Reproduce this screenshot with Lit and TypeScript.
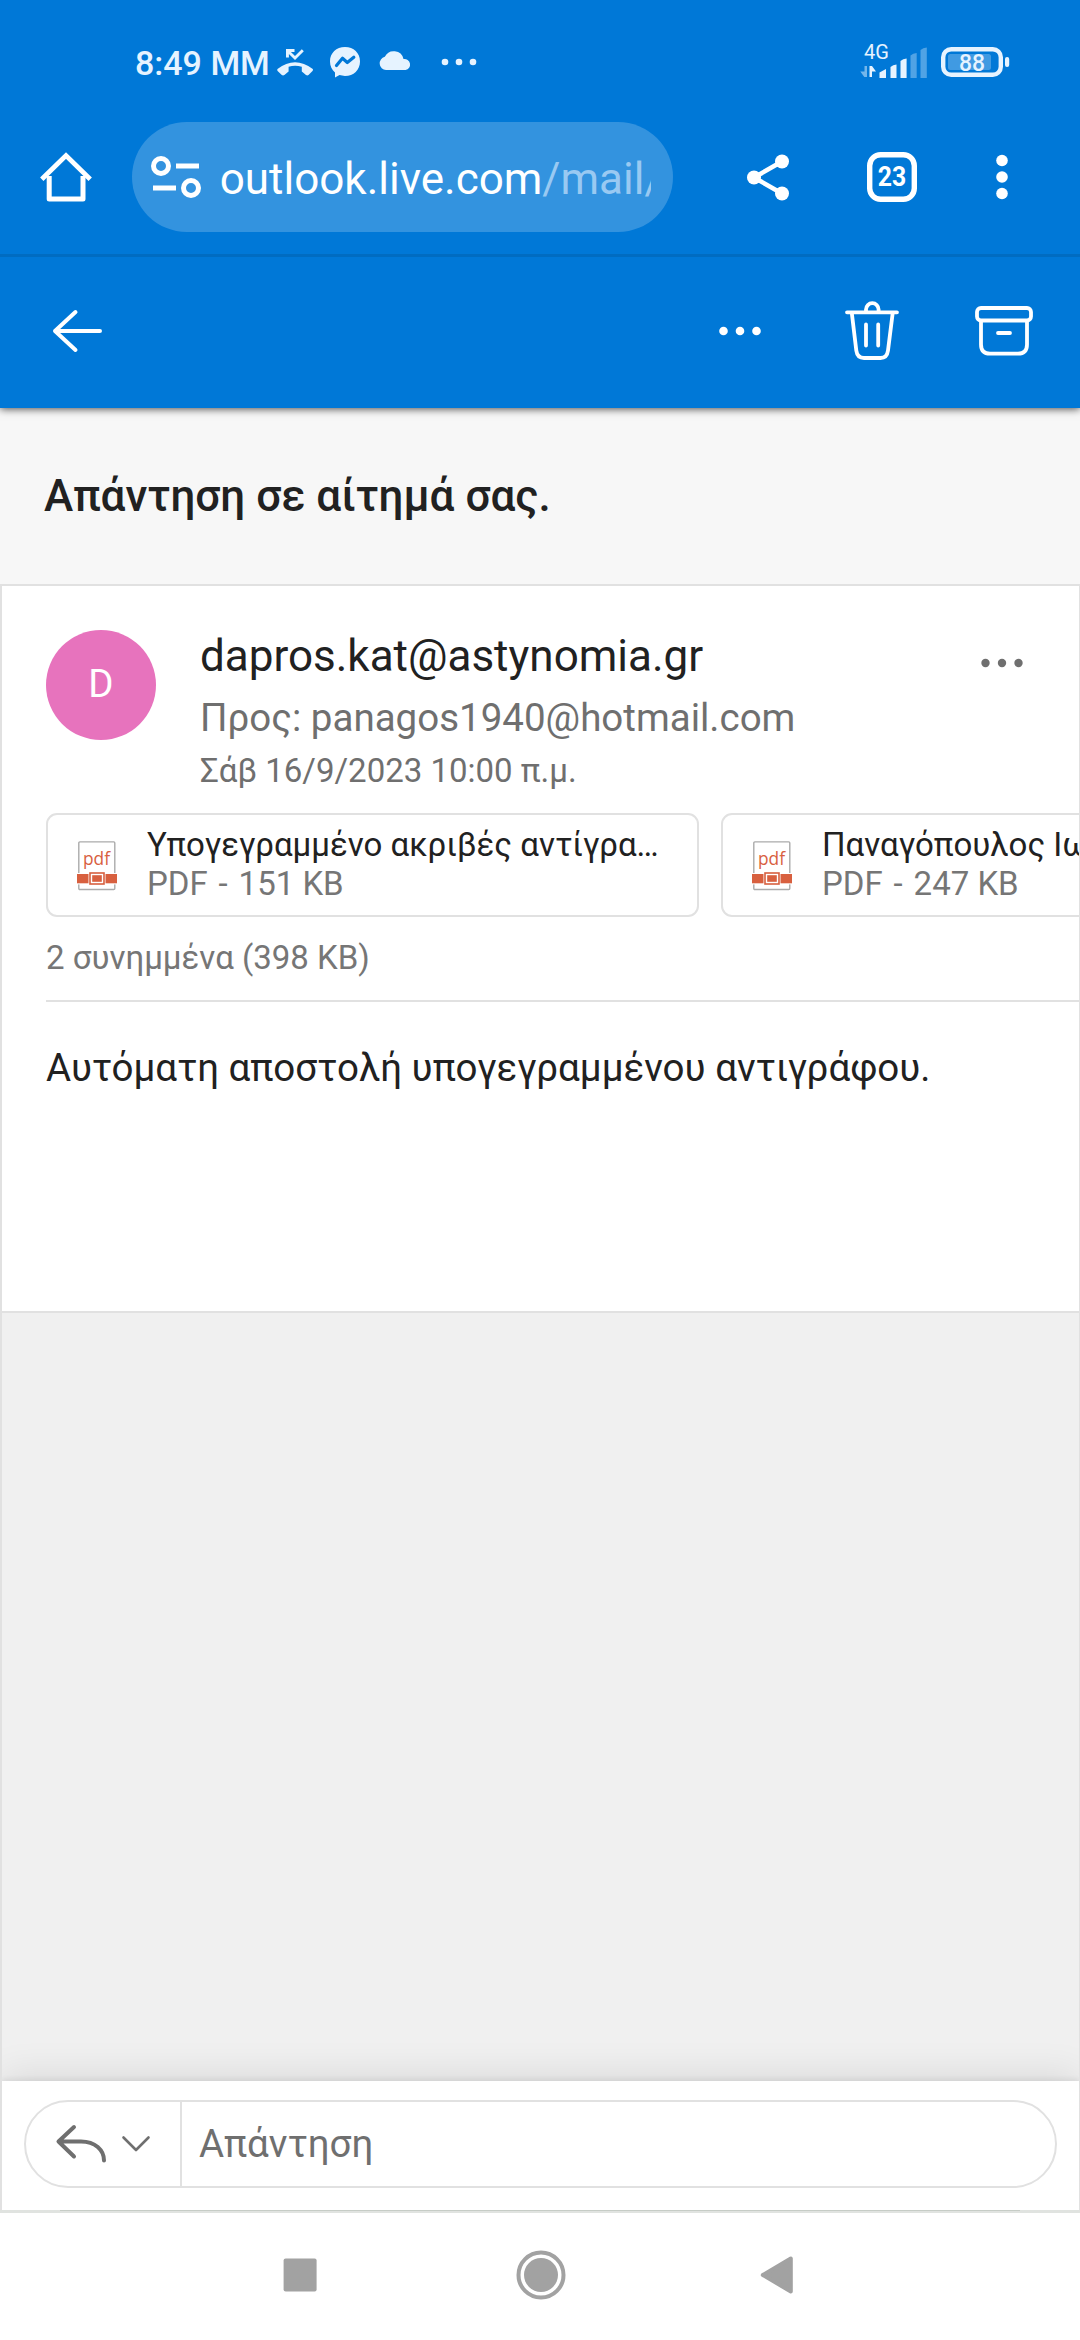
import { LitElement, html, css } from "lit";
import { customElement, property } from "lit/decorators.js";

const base = css`
  :host { display: block; font-family: Roboto, "Noto Sans", sans-serif; }
  * { box-sizing: border-box; }
  svg { display: block; flex: none; overflow: visible; }
`;

@customElement("status-bar")
class StatusBar extends LitElement {
  static styles = [base, css`
    .bar { height: 100px; display: flex; align-items: flex-start; padding: 43px 71px 0 135px; color: #e6f3ff; }
    .time { font-size: 34px; font-weight: 500; line-height: 40px; width: 142px; white-space: nowrap; }
    .spacer { flex: 1; }
    .net { font-size: 20px; fill: #e6f3ff; }
    .pct { font-size: 24px; font-weight: 500; fill: #e6f3ff; }
  `];
  render() {
    return html`<div class="bar">
      <div class="time">8:49 ΜΜ</div>
      <svg width="200" height="40" viewBox="277 43 200 40" fill="#e6f3ff">
        <path d="M277.500 69Q295 55.500 312.800 69Q313.400 70 312.500 71L308.500 75Q307.300 75.800 306 75L301.800 71.600V66.800Q295 64.800 288.600 66.800V71.600L284.400 75Q283 75.800 281.800 75L277.600 71Q276.800 70 277.500 69Z"/>
        <path d="M294.500 49H286V57.500H288.900V54L295 60L303.800 51.300L301.800 49.300L295 56L290.900 51.900H294.500Z"/>
        <path d="M345 47C336.300 47 330 53 330 61.400C330 66 331.900 69.800 335 72.500V77.500L339.500 75.100C341.200 75.600 343 75.900 345 75.900C353.700 75.900 360 69.800 360 61.400C360 53 353.700 47 345 47Z"/>
        <path d="M336.500 65.500L342.500 58.300L347.300 62.500L353.800 57.300" fill="none" stroke="#0078d7" stroke-width="3.200" stroke-linejoin="round" stroke-linecap="round"/>
        <path d="M386 70A6.700 6.700 0 0 1 384.800 56.800A10 10 0 0 1 403.500 59A5.600 5.600 0 0 1 405.600 70Z"/>
        <circle cx="445" cy="62" r="3.300"/><circle cx="459" cy="62" r="3.300"/><circle cx="473" cy="62" r="3.300"/>
      </svg>
      <div class="spacer"></div>
      <svg width="149" height="40" viewBox="860 43 149 40" fill="#e6f3ff">
        <text class="net" x="864" y="59">4G</text>
        <path d="M864.300 77L860.300 71.500H864.500V66H867V77Z" opacity=".5"/>
        <path d="M869.500 66H872L876 71.500H872V77H869.500Z"/>
        <path d="M879.500 72.500L886 69V78H879.500Z"/>
        <path d="M890.500 67Q893 64.500 896.500 64.500V78H890.500Z"/>
        <path d="M900.500 61Q903 58.500 906.600 58.500V78H900.500Z"/>
        <path d="M910.500 55.500Q913 53 916.700 53V78H910.500Z" opacity=".35"/>
        <path d="M920.500 50Q923 47.500 926.800 47.500V78H920.500Z" opacity=".35"/>
        <rect x="943.200" y="49.200" width="57.600" height="25.600" rx="8" fill="none" stroke="#e6f3ff" stroke-width="4.400"/>
        <rect x="948" y="54" width="43" height="16" rx="2.500" opacity=".28"/>
        <rect x="1005" y="57" width="4.200" height="10" rx="2"/>
        <text class="pct" x="959" y="71" textLength="26" lengthAdjust="spacingAndGlyphs">88</text>
      </svg>
    </div>`;
  }
}

@customElement("browser-bar")
class BrowserBar extends LitElement {
  static styles = [base, css`
    .bar { height: 157px; display: flex; align-items: flex-start; padding: 22px 71px 0 41px; border-bottom: 3px solid #006cc1; }
    .icon { height: 110px; display: flex; align-items: center; }
    .home { width: 91px; }
    .pill { width: 541px; height: 110px; border-radius: 55px; background: #3393df; display: flex; align-items: center; padding: 0 22px 0 18px; gap: 19px; }
    .url { flex: 1; min-width: 0; overflow: hidden; white-space: nowrap; font-size: 44px; line-height: 60px; padding-top: 4px; color: #fff; }
    .path { color: #99c9f2; }
    .share { width: 195px; padding-left: 74px; }
    .tabs { width: 130px; }
    .count { font-size: 28px; font-weight: 700; fill: #fff; }
  `];
  render() {
    return html`<div class="bar">
      <div class="icon home">
        <svg width="50" height="50" viewBox="0 0 50 50" fill="none" stroke="#fff" stroke-width="5" stroke-linejoin="round">
          <path d="M8.200 24V47H42V24"/><path d="M2.500 25.500L25 3.500L47.500 25.500" stroke-linecap="square" stroke-linejoin="miter" stroke-width="4.800"/>
        </svg>
      </div>
      <div class="pill">
        <svg width="51" height="44" viewBox="0 0 51 44" fill="none" stroke="#fff" stroke-width="5">
          <circle cx="11" cy="11" r="7.500"/><path d="M26 11H49M3 33H26"/><circle cx="41" cy="33" r="7.500"/>
        </svg>
        <div class="url">outlook.live.com<span class="path">/mail/0</span></div>
      </div>
      <div class="icon share">
        <svg width="43" height="48" viewBox="0 0 43 48" fill="#fff">
          <path d="M35 8.500L7 24.500L35 40.500" fill="none" stroke="#fff" stroke-width="4.600"/>
          <circle cx="35" cy="8.500" r="7"/><circle cx="7" cy="24.500" r="7"/><circle cx="35" cy="40.500" r="7"/>
        </svg>
      </div>
      <div class="icon tabs">
        <svg width="50" height="50" viewBox="0 0 50 50">
          <rect x="2.700" y="2.700" width="44.600" height="44.600" rx="11" fill="none" stroke="#fff" stroke-width="5.400"/>
          <text class="count" x="10.800" y="34" textLength="28.400" lengthAdjust="spacingAndGlyphs">23</text>
        </svg>
      </div>
      <div class="icon">
        <svg width="12" height="46" viewBox="0 0 12 46" fill="#fff"><circle cx="5" cy="6.500" r="5.800"/><circle cx="5" cy="23" r="5.800"/><circle cx="5" cy="39.500" r="5.800"/></svg>
      </div>
    </div>`;
  }
}

@customElement("mail-toolbar")
class MailToolbar extends LitElement {
  static styles = [base, css`
    .bar { height: 151px; display: flex; align-items: center; padding: 0 47px 3px 52px; }
    .spacer { flex: 1; }
    .more { margin-right: 84px; }
    .trash { margin-right: 76px; }
  `];
  render() {
    return html`<div class="bar">
      <svg width="50" height="44" viewBox="0 0 50 44" fill="none" stroke="#fff" stroke-width="4" stroke-linecap="round" stroke-linejoin="round"><path d="M23.500 3L3 22L23.500 41M3 22H48"/></svg>
      <div class="spacer"></div>
      <svg class="more" width="42" height="10" viewBox="0 0 42 10" fill="#fff"><circle cx="4.500" cy="5" r="4.300"/><circle cx="21" cy="5" r="4.300"/><circle cx="37.500" cy="5" r="4.300"/></svg>
      <svg class="trash" width="54" height="58" viewBox="845 302 54 58" fill="none" stroke="#fff" stroke-width="3.800" stroke-linecap="round" stroke-linejoin="round">
        <path d="M847 312.300H897M866 311V309.500A6.300 6.300 0 0 1 878.600 309.500V311M851.800 313L856.300 350.500Q857.300 358 864 358H880.500Q887 358 888 350.500L892.700 313M866 324.500V345.500M878.200 324.500V345.500"/>
      </svg>
      <svg width="58" height="52" viewBox="975 305 58 52" fill="none" stroke="#fff" stroke-width="3.800" stroke-linecap="round" stroke-linejoin="round">
        <rect x="977" y="308" width="54" height="12.500" rx="4"/>
        <path d="M981 321V344.500Q981 353.700 990 353.700H1018Q1027 353.700 1027 344.500V321M998 333H1010"/>
      </svg>
    </div>`;
  }
}

@customElement("attachment-card")
class AttachmentCard extends LitElement {
  @property() name = "";
  @property() kind = "";
  @property() size = "";
  static styles = [base, css`
    :host { flex: none; }
    .card { width: 653px; height: 104px; border: 2px solid #e1e1e1; border-radius: 11px; display: flex; padding: 10px 38px 0 29px; }
    .icon { margin-top: 16px; margin-right: 30px; }
    .pdf { font-family: "Open Sans", sans-serif; font-size: 17.500px; fill: #d8603f; }
    .info { min-width: 0; flex: 1; font-size: 33px; line-height: 39.400px; white-space: nowrap; }
    .name { color: #212121; overflow: hidden; text-overflow: ellipsis; }
    .size { color: #767676; }
    .dash { padding: 0 2.700px; }
  `];
  render() {
    return html`<div class="card">
      <svg class="icon" width="40" height="50" viewBox="0 0 40 50">
        <rect x="1.800" y=".9" width="36" height="47.600" rx="1" fill="#fff" stroke="#ababab" stroke-width="1.400"/>
        <rect x="-.5" y="32" width="41" height="11.400" fill="#fff"/>
        <rect x="0" y="33" width="40" height="9.300" fill="#d8603f"/>
        <rect x="11.500" y="30.500" width="17" height="14" fill="#fff"/>
        <rect x="13" y="32" width="14" height="11" fill="none" stroke="#d8603f" stroke-width="1.600"/>
        <rect x="15.200" y="34.200" width="9.600" height="6.600" fill="#d8603f"/>
        <text class="pdf" x="6" y="23.500" textLength="27" lengthAdjust="spacingAndGlyphs">pdf</text>
      </svg>
      <div class="info"><div class="name">${this.name}</div><div class="size">${this.kind} <span class="dash">-</span> ${this.size}</div></div>
    </div>`;
  }
}

@customElement("mail-message")
class MailMessage extends LitElement {
  static styles = [base, css`
    .msg { height: 729px; background: #fff; border-top: 2px solid #e1e1e1; border-bottom: 2px solid #e1e1e1; }
    .head { display: flex; height: 227px; padding: 44px 56px 0 44px; }
    .avatar { width: 110px; height: 110px; border-radius: 50%; background: #e773bd; color: #fff; font-size: 38.500px; line-height: 107px; text-align: center; margin-right: 44px; flex: none; }
    .who { flex: 1; white-space: nowrap; color: #6f6f6f; }
    .from { font-size: 44px; line-height: 52px; color: #212121; }
    .to { font-size: 38.500px; line-height: 58px; margin-top: 7px; }
    .date { font-size: 33px; line-height: 44px; margin-top: 2px; }
    .dots { margin-top: 28px; }
    .files { display: flex; gap: 22px; margin-left: 44px; overflow: hidden; }
    .sum { font-size: 33px; line-height: 40px; color: #767676; margin: 21px 0 22px 44px; }
    .body { margin-left: 44px; border-top: 2px solid #e1e1e1; padding-top: 42px; font-size: 38.500px; line-height: 48px; color: #212121; white-space: nowrap; }
  `];
  render() {
    return html`<div class="msg">
      <div class="head">
        <div class="avatar">D</div>
        <div class="who">
          <div class="from">dapros.kat@astynomia.gr</div>
          <div class="to">Προς: panagos1940@hotmail.com</div>
          <div class="date">Σάβ 16/9/2023 10:00 π.μ.</div>
        </div>
        <svg class="dots" width="42" height="10" viewBox="0 0 42 10" fill="#6f6f6f"><circle cx="4.500" cy="5" r="4.200"/><circle cx="21" cy="5" r="4.200"/><circle cx="37.500" cy="5" r="4.200"/></svg>
      </div>
      <div class="files">
        <attachment-card name="Υπογεγραμμένο ακριβές αντίγραφο.pdf" kind="PDF" size="151 KB"></attachment-card>
        <attachment-card name="Παναγόπουλος Ιωάννης.pdf" kind="PDF" size="247 KB"></attachment-card>
      </div>
      <div class="sum">2 συνημμένα (398 KB)</div>
      <div class="body">Αυτόματη αποστολή υπογεγραμμένου αντιγράφου.</div>
    </div>`;
  }
}

@customElement("reply-bar")
class ReplyBar extends LitElement {
  static styles = [base, css`
    .bar { height: 129px; background: #fff; padding: 19px 22px 0 22px; box-shadow: 0 -2px 5px rgba(0,0,0,.07), 0 -8px 34px rgba(0,0,0,.09); }
    .pill { height: 88px; border: 2px solid #e1e1e1; border-radius: 44px; display: flex; }
    .modes { width: 156px; border-right: 2px solid #e1e1e1; display: flex; align-items: flex-start; padding: 22px 0 0 29px; gap: 15px; }
    .chev { margin-top: 11px; }
    .hint { font-size: 38.500px; line-height: 84px; color: #6f6f6f; padding-left: 17px; }
  `];
  render() {
    return html`<div class="bar"><div class="pill">
      <div class="modes">
        <svg width="52" height="42" viewBox="55 2124 52 42" fill="none" stroke="#6f6f6f" stroke-width="4" stroke-linecap="round" stroke-linejoin="round"><path d="M74 2127L58.500 2141.500L74 2156.500M58.500 2141.500H81C95 2141.500 104 2150 104 2160.500"/></svg>
        <svg class="chev" width="28" height="17" viewBox="0 0 28 17" fill="none" stroke="#6f6f6f" stroke-width="2.600" stroke-linecap="round" stroke-linejoin="round"><path d="M1.500 2.500L14 15L26.500 2.500"/></svg>
      </div>
      <div class="hint">Απάντηση</div>
    </div></div>`;
  }
}

@customElement("nav-bar")
class NavBar extends LitElement {
  static styles = [base, css`
    .edge { height: 3px; background: #e0e3e0; padding: 0 60px; }
    .line { height: 1px; background: #c6ccc6; }
    .bar { height: 127px; background: #fff; display: grid; grid-template-columns: 283px 198px 244px 1fr; align-items: center; padding-bottom: 3px; }
    .square { grid-column: 2; }
    .shifted { margin-left: 35px; }
  `];
  render() {
    return html`<div class="edge"><div class="line"></div></div><div class="bar">
      <svg class="square" width="34" height="34" viewBox="0 0 34 34"><rect x=".6" y=".5" width="33" height="33" rx="2" fill="#a2a2a2"/></svg>
      <svg class="shifted" width="50" height="50" viewBox="0 0 50 50"><circle cx="25" cy="25" r="22.500" fill="none" stroke="#a2a2a2" stroke-width="4"/><circle cx="25" cy="25" r="17" fill="#a2a2a2"/></svg>
      <svg class="shifted" width="34" height="38" viewBox="0 0 34 38" fill="#a2a2a2" stroke="#a2a2a2" stroke-width="4" stroke-linejoin="round"><path d="M2.800 19L30.800 2.500V35.500Z"/></svg>
    </div>`;
  }
}

@customElement("app-root")
class AppRoot extends LitElement {
  static styles = [base, css`
    .page { width: 1080px; height: 2340px; display: flex; flex-direction: column; overflow: hidden; background: #fff; }
    .top { background: #0078d7; box-shadow: 0 1px 8px rgba(0,0,0,.7); position: relative; z-index: 1; flex: none; }
    .subject { height: 176px; flex: none; background: #f7f7f7; padding: 62px 44px 0; font-size: 44px; font-weight: 500; line-height: 52px; color: #212121; }
    .pane { flex: 1; display: flex; flex-direction: column; background: #f0f0f0; border-left: 2px solid #e1e1e1; border-right: 1px solid #e1e1e1; overflow: hidden; }
    .gap { flex: 1; }
  `];
  render() {
    return html`<div class="page">
      <div class="top"><status-bar></status-bar><browser-bar></browser-bar><mail-toolbar></mail-toolbar></div>
      <div class="subject">Απάντηση σε αίτημά σας.</div>
      <div class="pane"><mail-message></mail-message><div class="gap"></div><reply-bar></reply-bar></div>
      <nav-bar></nav-bar>
    </div>`;
  }
}
